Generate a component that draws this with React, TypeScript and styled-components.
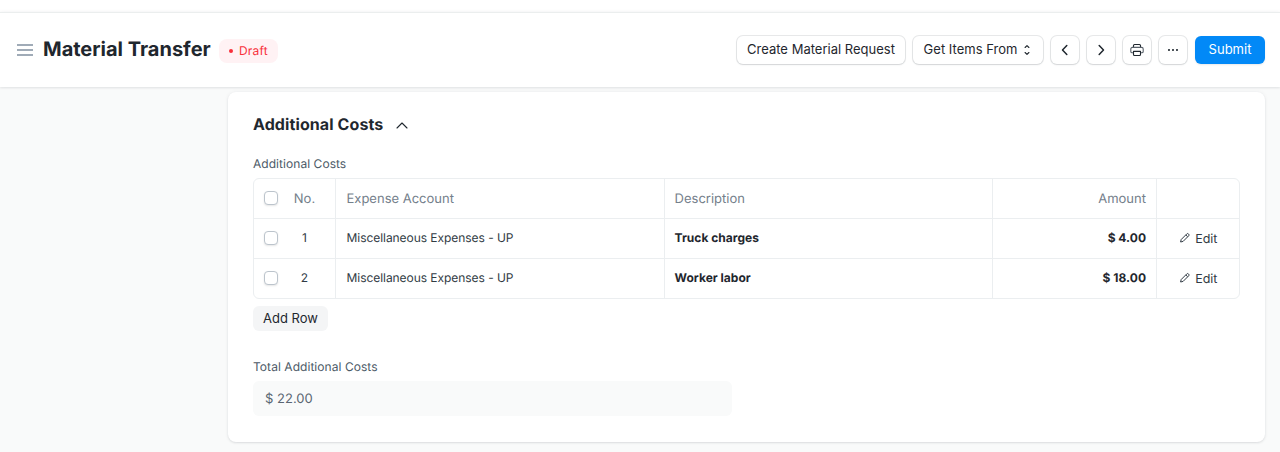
import React from "react";
import styled, { createGlobalStyle, css } from "styled-components";

const GlobalStyle = createGlobalStyle`
  *, *::before, *::after { box-sizing: border-box; }
  body {
    margin: 0;
    background: #f9fafa;
    font-family: Inter, "Liberation Sans", sans-serif;
    font-size: 13px;
    letter-spacing: 0.01px;
    color: #1f272e;
    overflow: hidden;
    text-rendering: geometricPrecision;
    -webkit-font-smoothing: antialiased;
  }
  button { font: inherit; letter-spacing: inherit; color: inherit; }
`;

const Page = styled.div`
  height: 452px;
  overflow: hidden;
`;

const NavStrip = styled.div`
  height: 12px;
  background: #fff;
`;

const PageHead = styled.header`
  position: relative;
  height: 75px;
  display: flex;
  align-items: center;
  padding: 0 15px 0 17px;
  background: #fff;
  border-top: 1px solid #ebeeee;
  box-shadow: 0 1px 2px rgba(25, 39, 52, 0.08), 0 0 4px rgba(25, 39, 52, 0.06);
`;

const MenuIcon = styled.svg`
  display: block;
  margin-right: 10px;
`;

const Title = styled.h1`
  margin: -2px 9px 0 0;
  width: 167px;
  font-size: 20px;
  line-height: 26px;
  font-weight: 700;
  letter-spacing: 0;
  white-space: nowrap;
`;

const StatusPill = styled.span`
  display: flex;
  align-items: center;
  gap: 6px;
  width: 59px;
  height: 24px;
  margin-top: 1px;
  padding-left: 10px;
  border-radius: 8px;
  background: #fff2f4;
  color: #f8303a;
  font-size: 12px;
  letter-spacing: 0.2px;

  &::before {
    content: "";
    width: 4px;
    height: 4px;
    border-radius: 50%;
    background: currentColor;
  }
`;

const Actions = styled.div`
  display: flex;
  align-items: center;
  gap: 8px;
  margin-left: auto;
`;

const Button = styled.button<{ $width: number; $primary?: boolean }>`
  display: flex;
  align-items: center;
  justify-content: center;
  gap: 6px;
  width: ${(p) => p.$width}px;
  height: 28px;
  padding: 0 0 2px;
  border: 0;
  border-radius: 6px;
  white-space: nowrap;
  background: #fff;
  box-shadow: 0 0 0 1px rgba(25, 39, 52, 0.1), 0 1px 2px rgba(25, 39, 52, 0.1);
  ${(p) =>
    p.$primary &&
    css`
      background: #0289f7;
      color: #fff;
      box-shadow: 0 1px 2px rgba(25, 39, 52, 0.1);
    `}

  svg { position: relative; top: 1px; }
`;

const Card = styled.section`
  width: 1037px;
  height: 350px;
  margin: 5px 0 0 228px;
  padding: 21px 25px 0;
  background: #fff;
  border-radius: 8px;
  box-shadow: 0 1px 2px rgba(25, 39, 52, 0.1), 0 0 4px rgba(25, 39, 52, 0.06);
`;

const SectionHead = styled.h2`
  display: flex;
  align-items: center;
  gap: 12px;
  height: 22px;
  margin: 0;
  font-size: 16px;
  font-weight: 700;
  letter-spacing: 0.1px;

  svg { position: relative; top: 0.5px; }
`;

const Label = styled.div<{ $top: number; $bottom: number }>`
  margin: ${(p) => p.$top}px 0 ${(p) => p.$bottom}px;
  font-size: 12px;
  line-height: 16px;
  letter-spacing: 0.05px;
  color: #4c5a67;
`;

const Grid = styled.div`
  width: 987px;
  border: 1px solid #ebeef0;
  border-radius: 6px;
`;

const Row = styled.div<{ $head?: boolean }>`
  display: grid;
  grid-template-columns: 82px 329px 328px 164px 82px;
  height: ${(p) => (p.$head ? 39 : 40)}px;
  border-top: ${(p) => (p.$head ? "0" : "1px solid #ebeef0")};
  font-size: ${(p) => (p.$head ? 13 : 12)}px;
  letter-spacing: ${(p) => (p.$head ? 0 : -0.05)}px;
  color: ${(p) => (p.$head ? "#74808b" : "#313b44")};
`;

const Cell = styled.div<{ $align?: string; $bold?: boolean }>`
  display: flex;
  align-items: center;
  justify-content: ${(p) => p.$align ?? "flex-start"};
  padding: 0 10px 2px 9.6px;
  white-space: nowrap;
  ${(p) => p.$bold && "font-weight: 700; letter-spacing: 0.02px; color: #1f272e;"}

  &:not(:last-child) { border-right: 1px solid #ebeef0; }
  ${Row}:first-child > & { padding-bottom: 0; }
`;

const AccountCell = styled(Cell)`
  padding-left: 10.5px;
`;

const SelectCell = styled.div`
  display: flex;
  align-items: center;
  padding: 0 0 1px 10px;
  border-right: 1px solid #ebeef0;
`;

const Checkbox = styled.span`
  width: 14px;
  height: 14px;
  border: 1px solid #bcc4cc;
  border-radius: 4px;
  background: #fff;
  box-shadow: 0 1px 2px rgba(0, 0, 0, 0.1);
`;

const RowNumber = styled.span<{ $head?: boolean }>`
  width: 53px;
  padding: ${(p) => (p.$head ? "2px 0 0" : "0 0 2px")};
  text-align: center;
`;

const Edit = styled.span`
  display: flex;
  align-items: center;
  gap: 4px;
  padding-top: 3px;
  font-size: 12.5px;
  letter-spacing: 0;

  svg { margin: -2px 0 0 1px; }
`;

const AddRow = styled.button`
  display: block;
  width: 75px;
  height: 25px;
  margin-top: 7px;
  padding: 0 0 1px;
  border: 0;
  border-radius: 6px;
  background: #f4f5f6;
`;

const ReadOnlyValue = styled.div`
  width: 479px;
  height: 35px;
  padding: 1px 12px 0;
  border-radius: 6px;
  background: #f9fafa;
  line-height: 35px;
  color: #5a6672;
`;

const Stroke = ({ size, w = 1.3, children }: { size: number; w?: number; children: React.ReactNode }) => (
  <svg width={size} height={size} viewBox="0 0 16 16" fill="none" stroke="#1f272e" strokeWidth={w} strokeLinecap="round" strokeLinejoin="round">
    {children}
  </svg>
);

const Pencil = () => (
  <svg width="12" height="12" viewBox="0 0 12 12" fill="none" stroke="#313b44" strokeWidth="1" strokeLinejoin="round">
    <path d="M7.8 1.9a1.1 1.1 0 0 1 1.6 0l.3.3a1.1 1.1 0 0 1 0 1.6L4.1 9.4l-2.5.6.6-2.5zM6.9 3l1.7 1.7" />
  </svg>
);

const rows = [
  { account: "Miscellaneous Expenses - UP", description: "Truck charges", amount: "$ 4.00" },
  { account: "Miscellaneous Expenses - UP", description: "Worker labor", amount: "$ 18.00" },
];

export default function App() {
  return (
    <Page>
      <GlobalStyle />
      <NavStrip />
      <PageHead>
        <MenuIcon width="16" height="14" viewBox="0 0 16 14" stroke="#a0abb7" strokeWidth="2">
          <path d="M0 2h16M0 7h16M0 12h16" />
        </MenuIcon>
        <Title>Material Transfer</Title>
        <StatusPill>Draft</StatusPill>
        <Actions>
          <Button $width={168}>Create Material Request</Button>
          <Button $width={130}>
            Get Items From
            <svg width="9" height="12" viewBox="0 0 9 12" fill="none" stroke="#1f272e" strokeWidth="1.1" strokeLinecap="round" strokeLinejoin="round">
              <path d="M2.1 3.5l1.9-1.9 1.9 1.9M2.1 8.5l1.9 1.9 1.9-1.9" />
            </svg>
          </Button>
          <Button $width={28} aria-label="Previous">
            <Stroke size={16} w={1.5}><path d="M9.8 3.5L5.5 8l4.3 4.5" /></Stroke>
          </Button>
          <Button $width={28} aria-label="Next">
            <Stroke size={16} w={1.5}><path d="M6.2 3.5L10.5 8l-4.3 4.5" /></Stroke>
          </Button>
          <Button $width={28} aria-label="Print">
            <Stroke size={16} w={1.1}>
              <path d="M4.5 5.4V3.5a1 1 0 0 1 1-1h5a1 1 0 0 1 1 1v1.9" />
              <path stroke="#59616a" d="M4.2 10.8H3.1a1.3 1.3 0 0 1-1.3-1.3V7a1.6 1.6 0 0 1 1.6-1.6h9.2A1.6 1.6 0 0 1 14.2 7v2.5a1.3 1.3 0 0 1-1.3 1.3h-1.1" />
              <path d="M4.5 9.4h7v3.1a1 1 0 0 1-1 1h-5a1 1 0 0 1-1-1z" />
            </Stroke>
          </Button>
          <Button $width={28} aria-label="More">
            <svg width="12" height="4" viewBox="0 0 12 4" fill="#1f272e">
              <circle cx="2" cy="2" r="1.05" /><circle cx="6" cy="2" r="1.05" /><circle cx="10" cy="2" r="1.05" />
            </svg>
          </Button>
          <Button $width={70} $primary>Submit</Button>
        </Actions>
      </PageHead>
      <Card>
        <SectionHead>
          Additional Costs
          <svg width="14" height="10" viewBox="0 0 14 10" fill="none" stroke="#1f272e" strokeWidth="1.1" strokeLinecap="round" strokeLinejoin="round">
            <path d="M2 8l5-5 5 5" />
          </svg>
        </SectionHead>
        <Label $top={21} $bottom={6}>Additional Costs</Label>
        <Grid>
          <Row $head>
            <SelectCell><Checkbox /><RowNumber $head>No.</RowNumber></SelectCell>
            <AccountCell>Expense Account</AccountCell>
            <Cell>Description</Cell>
            <Cell $align="flex-end">Amount</Cell>
            <Cell />
          </Row>
          {rows.map((row, i) => (
            <Row key={row.description}>
              <SelectCell><Checkbox /><RowNumber>{i + 1}</RowNumber></SelectCell>
              <AccountCell>{row.account}</AccountCell>
              <Cell $bold>{row.description}</Cell>
              <Cell $align="flex-end" $bold>{row.amount}</Cell>
              <Cell $align="center"><Edit><Pencil />Edit</Edit></Cell>
            </Row>
          ))}
        </Grid>
        <AddRow>Add Row</AddRow>
        <Label $top={28} $bottom={6}>Total Additional Costs</Label>
        <ReadOnlyValue>$ 22.00</ReadOnlyValue>
      </Card>
    </Page>
  );
}
